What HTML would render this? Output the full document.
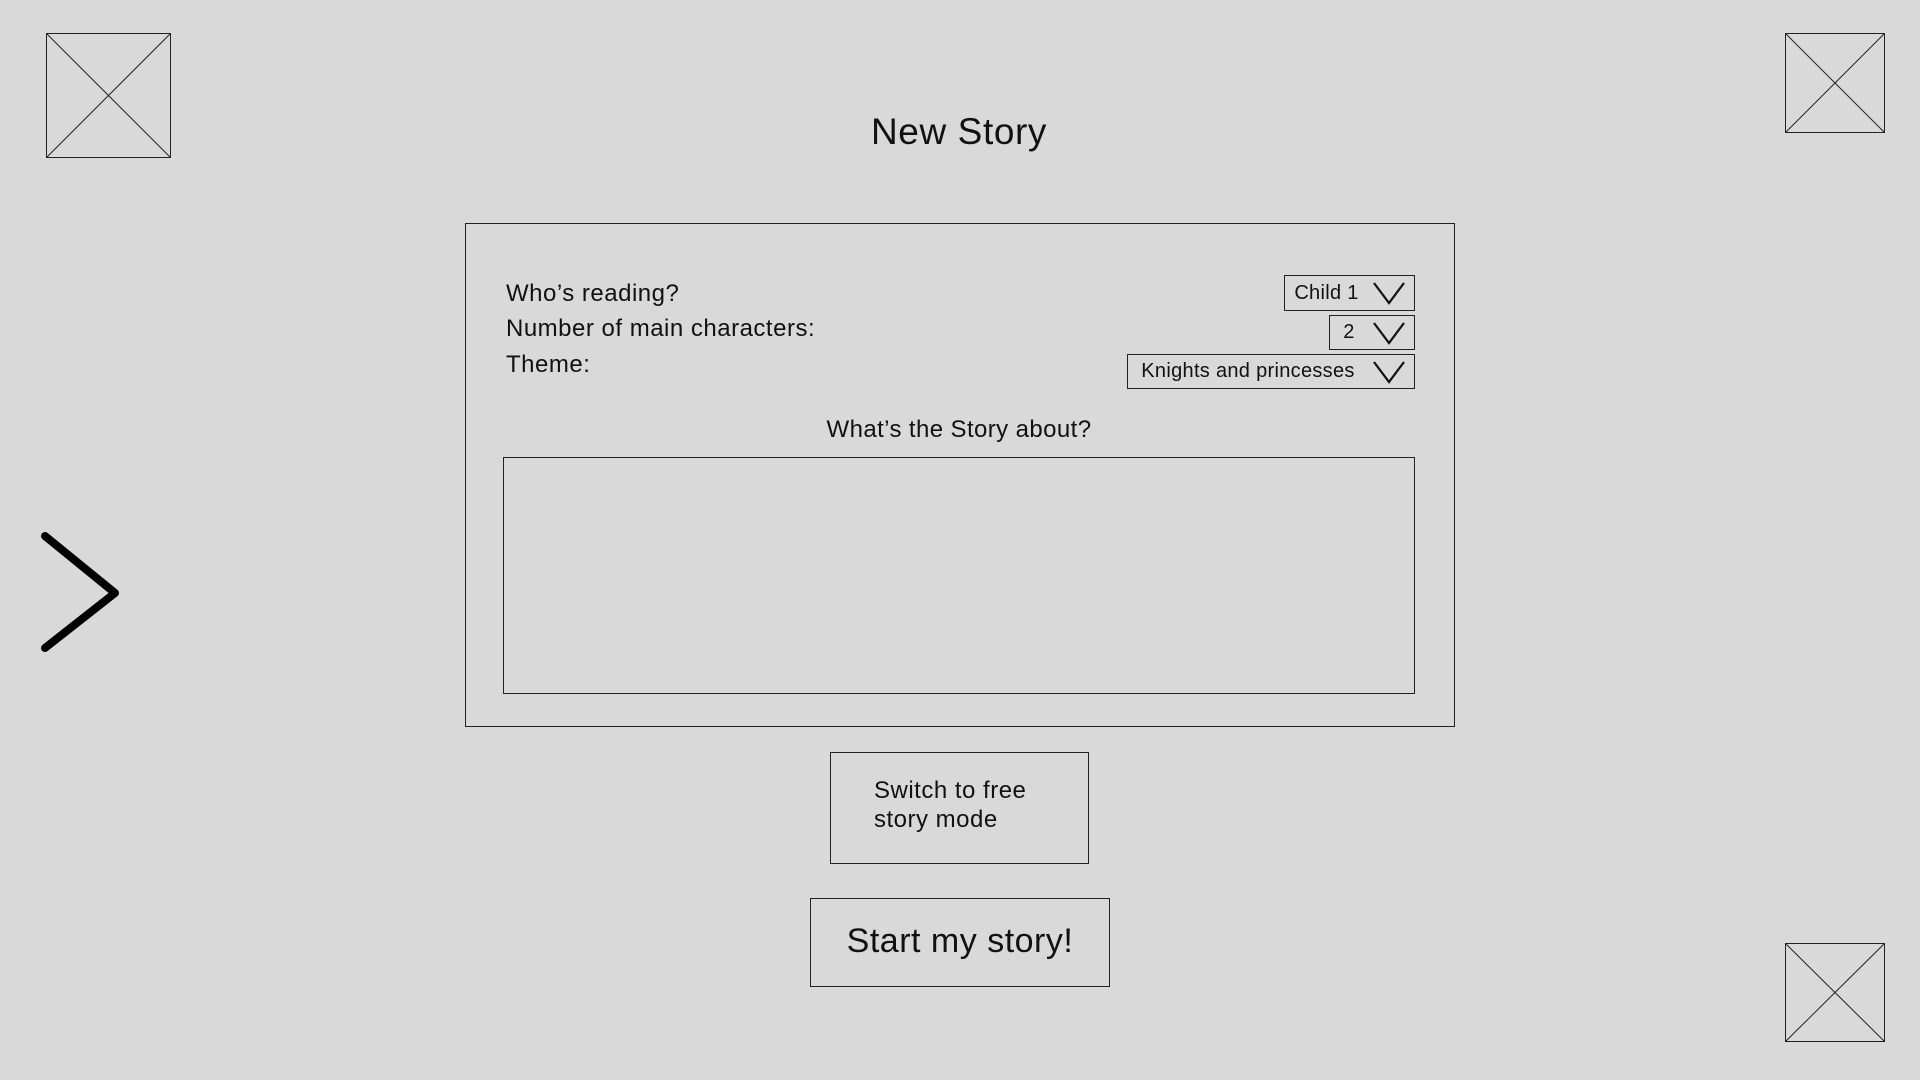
<!DOCTYPE html>
<html><head><meta charset="utf-8"><style>
*{margin:0;padding:0;box-sizing:border-box}
body{width:1920px;height:1080px;background:#d9d9d9;position:relative;overflow:hidden;font-family:"Liberation Sans",sans-serif;color:#111}
.a{position:absolute}
.box{position:absolute;border:1px solid #222}
.lbl{position:absolute;font-size:24px;line-height:28px;left:506px;letter-spacing:0.5px}
.dd{position:absolute;border:1px solid #222;font-size:20px;display:flex;align-items:center;letter-spacing:0.3px}
.dd span{flex:1;text-align:center;padding-right:46px}
.dd svg{position:absolute;right:8px;top:50%;transform:translateY(-50%)}
</style></head><body>
<svg class="a" style="left:0;top:0" width="1920" height="1080">
<g fill="none" stroke="#222" stroke-width="1">
<rect x="46.5" y="33.5" width="124" height="124"/><line x1="46.5" y1="33.5" x2="170.5" y2="157.5"/><line x1="170.5" y1="33.5" x2="46.5" y2="157.5"/>
<rect x="1785.5" y="33.5" width="99" height="99"/><line x1="1785.5" y1="33.5" x2="1884.5" y2="132.5"/><line x1="1884.5" y1="33.5" x2="1785.5" y2="132.5"/>
<rect x="1785.5" y="943.5" width="99" height="98"/><line x1="1785.5" y1="943.5" x2="1884.5" y2="1041.5"/><line x1="1884.5" y1="943.5" x2="1785.5" y2="1041.5"/>
</g>
<polyline points="45,536 115,593 45,648" fill="none" stroke="#000" stroke-width="8" stroke-linecap="round" stroke-linejoin="round"/>
</svg>
<div class="a" style="left:0;width:1918px;top:111px;text-align:center;font-size:37px;line-height:42px;letter-spacing:0.6px">New Story</div>
<div class="box" style="left:465px;top:223px;width:990px;height:504px"></div>
<div class="lbl" style="top:280px">Who’s reading?</div>
<div class="lbl" style="top:315px">Number of main characters:</div>
<div class="lbl" style="top:351px">Theme:</div>
<div class="dd" style="left:1284px;top:275px;width:131px;height:36px"><span>Child 1</span><svg width="34" height="26"><polyline points="2,3 17,23 32,3" fill="none" stroke="#111" stroke-width="2.2"/></svg></div>
<div class="dd" style="left:1329px;top:315px;width:86px;height:35px"><span>2</span><svg width="34" height="26"><polyline points="2,3 17,23 32,3" fill="none" stroke="#111" stroke-width="2.2"/></svg></div>
<div class="dd" style="left:1127px;top:354px;width:288px;height:35px"><span>Knights and princesses</span><svg width="34" height="26"><polyline points="2,3 17,23 32,3" fill="none" stroke="#111" stroke-width="2.2"/></svg></div>
<div class="a" style="left:503px;width:912px;top:416px;text-align:center;font-size:24px;line-height:28px;letter-spacing:0.4px">What’s the Story about?</div>
<div class="box" style="left:503px;top:457px;width:912px;height:237px"></div>
<div class="box" style="left:830px;top:752px;width:259px;height:112px"></div>
<div class="a" style="left:874px;top:776px;font-size:24px;line-height:29px;letter-spacing:0.5px">Switch to free<br>story mode</div>
<div class="box" style="left:810px;top:898px;width:300px;height:89px;display:flex;align-items:center;justify-content:center;font-size:34px;letter-spacing:0.5px;padding-bottom:3px">Start my story!</div>
</body></html>
